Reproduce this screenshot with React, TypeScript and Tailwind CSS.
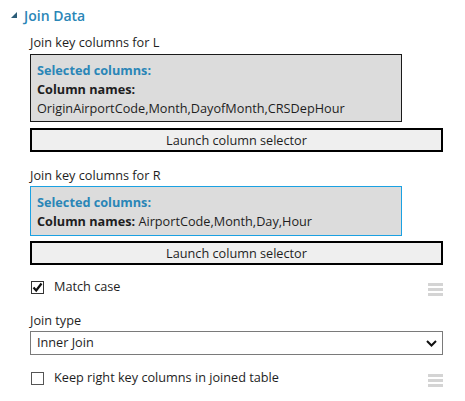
export default function App() {
  return (
    <div className="w-[465px] h-[401px] bg-white text-[12.7px] text-[#1e1e1e] font-['Open_Sans',sans-serif] overflow-hidden">
      {/* Section header */}
      <div className="h-[30px] flex items-center pl-[11px]">
        <svg width="6" height="6" viewBox="0 0 6 6" className="mr-[7px]">
          <polygon points="6,0 6,6 0,6" fill="#2b5c78" />
        </svg>
        <span className="text-[14px] font-semibold text-[#2a86b7]">Join Data</span>
      </div>

      <div className="pl-[30px] pr-[22px] flex flex-col">
        {/* L */}
        <div className="mt-[2px] leading-[20px] h-[20px]">Join key columns for L</div>
        <div className="mt-[2px] w-[372px] h-[68px] border border-[#1a1a1a] bg-[#dcdcdc] px-[6px] pt-[6px] leading-[19px]">
          <div className="font-bold text-[#2a86b7]">Selected columns:</div>
          <div className="font-bold">Column names:</div>
          <div>OriginAirportCode,Month,DayofMonth,CRSDepHour</div>
        </div>
        <button className="mt-[6px] h-[24px] w-[413px] border-2 border-black bg-[#efefef] leading-[20px]">
          Launch column selector
        </button>

        {/* R */}
        <div className="mt-[13px] leading-[20px] h-[20px]">Join key columns for R</div>
        <div className="mt-[1px] w-[372px] h-[50px] border border-[#1ba1e2] bg-[#dcdcdc] px-[6px] pt-[6px] leading-[19px]">
          <div className="font-bold text-[#2a86b7]">Selected columns:</div>
          <div>
            <span className="font-bold">Column names:</span> AirportCode,Month,Day,Hour
          </div>
        </div>
        <button className="mt-[5px] h-[24px] w-[413px] border-2 border-black bg-[#efefef] leading-[20px]">
          Launch column selector
        </button>

        {/* Match case */}
        <div className="mt-[12px] h-[20px] w-[413px] flex items-center">
          <div className="ml-[1px] w-[13px] h-[13px] border border-[#333] flex items-center justify-center">
            <svg width="11" height="11" viewBox="0 0 11 11">
              <path d="M1.5 5.5 L4.2 8.5 L9.5 1.5" fill="none" stroke="#111" strokeWidth="2.2" />
            </svg>
          </div>
          <span className="ml-[10px]">Match case</span>
          <Grip />
        </div>

        {/* Join type */}
        <div className="mt-[13px] leading-[20px] h-[20px]">Join type</div>
        <div className="mt-[1px] h-[24px] w-[413px] border border-[#7a7a7a] flex items-center pl-[6px] pr-[5px]">
          <span className="flex-1">Inner Join</span>
          <svg width="11" height="7" viewBox="0 0 11 7">
            <path d="M1 1 L5.5 5.5 L10 1" fill="none" stroke="#111" strokeWidth="2" />
          </svg>
        </div>

        {/* Keep right key columns */}
        <div className="mt-[13px] h-[20px] w-[413px] flex items-center">
          <div className="ml-[1px] w-[13px] h-[13px] border border-[#555]" />
          <span className="ml-[10px]">Keep right key columns in joined table</span>
          <Grip />
        </div>
      </div>
    </div>
  );
}

function Grip() {
  return (
    <div className="ml-auto w-[15px] flex flex-col gap-[2px] mt-[5px]">
      <div className="h-[3px] bg-[#d4d4d4]" />
      <div className="h-[3px] bg-[#d4d4d4]" />
      <div className="h-[3px] bg-[#d4d4d4]" />
    </div>
  );
}
